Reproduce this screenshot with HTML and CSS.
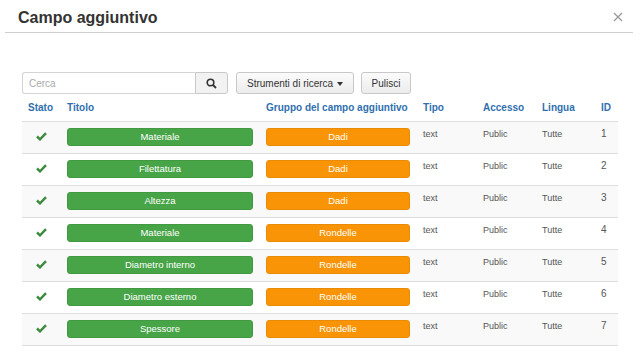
FILE: index.html
```html
<!DOCTYPE html>
<html lang="it">
<head>
  <meta charset="UTF-8">
  <title>Campo aggiuntivo</title>
  <link rel="stylesheet" href="styles.css">
</head>
<body>

  <div class="modal-header">
    <h3>Campo aggiuntivo</h3>
    <svg class="close" width="10" height="10" viewBox="0 0 10 10"><path d="M1 1L9 9M9 1L1 9" stroke="#9a9a9a" stroke-width="1.3" fill="none"/></svg>
  </div>

  <div class="modal-body">
    <div class="toolbar">
      <div class="search">
        <input type="text" placeholder="Cerca">
        <button class="btn btn-search">
          <svg width="11" height="11" viewBox="0 0 11 11"><circle cx="4.5" cy="4.5" r="3.3" stroke="#333" stroke-width="1.6" fill="none"/><path d="M7 7L10 10" stroke="#333" stroke-width="1.8"/></svg>
        </button>
      </div>
      <button class="btn btn-tools">Strumenti di ricerca <span class="caret"></span></button>
      <button class="btn btn-clear">Pulisci</button>
    </div>

    <table>
      <colgroup>
        <col style="width:39px"><col style="width:199px"><col style="width:157px">
        <col style="width:60px"><col style="width:59px"><col style="width:59px"><col style="width:23px">
      </colgroup>
      <thead>
        <tr>
          <th>Stato</th>
          <th>Titolo</th>
          <th>Gruppo del campo aggiuntivo</th>
          <th>Tipo</th>
          <th>Accesso</th>
          <th>Lingua</th>
          <th>ID</th>
        </tr>
      </thead>
      <tbody id="righe"></tbody>
    </table>
  </div>

  <script>
    const campi = [
      ["Materiale", "Dadi"],
      ["Filettatura", "Dadi"],
      ["Altezza", "Dadi"],
      ["Materiale", "Rondelle"],
      ["Diametro interno", "Rondelle"],
      ["Diametro esterno", "Rondelle"],
      ["Spessore", "Rondelle"]
    ];

    const check = '<svg width="11" height="9" viewBox="0 0 11 9"><path d="M1 4.5L4 7.3L10 1.2" stroke="#3b8a3b" stroke-width="2.4" fill="none"/></svg>';

    let html = "";
    campi.forEach((c, i) => {
      html += `<tr>
        <td class="stato">${check}</td>
        <td><span class="lbl lbl-titolo">${c[0]}</span></td>
        <td><span class="lbl lbl-gruppo">${c[1]}</span></td>
        <td>text</td>
        <td>Public</td>
        <td>Tutte</td>
        <td>${i + 1}</td>
      </tr>`;
    });
    document.getElementById("righe").innerHTML = html;
  </script>

</body>
</html>
```

FILE: styles.css
```css
body { margin: 0; background: #fff; font-family: "Liberation Sans", Arial, sans-serif; color: #333; }

.modal-header { display: flex; justify-content: space-between; align-items: center; margin: 0 7px 0 5px; padding: 8px 10px 4px 13px; border-bottom: 1px solid #cfcfcf; }
.modal-header h3 { margin: 0; font-size: 16px; line-height: 20px; font-weight: bold; color: #333; }
.close { margin-top: -2px; }

.modal-body { padding: 39px 22px 0 22px; }

.toolbar { display: flex; align-items: flex-start; height: 22px; margin-bottom: 1px; }
.search { display: flex; }
.search input { width: 173px; height: 22px; box-sizing: border-box; border: 1px solid #d4d4d4; border-right: none; border-radius: 3px 0 0 3px; padding: 2px 6px; font-size: 10px; font-family: inherit; color: #555; }
.search input::placeholder { color: #aaa; }

.btn { height: 22px; box-sizing: border-box; border: 1px solid #c8c8c8; background: linear-gradient(#fbfbfb, #ececec); border-radius: 3px; font-family: inherit; font-size: 10px; color: #333; padding: 0 9px; }
.btn-search { width: 33px; border-radius: 0 3px 3px 0; display: flex; align-items: center; justify-content: center; padding: 0; background: #f2f2f2; }
.btn-tools { margin-left: 8px; width: 118px; }
.btn-clear { margin-left: 7px; width: 50px; }
.caret { display: inline-block; border-top: 4px solid #333; border-left: 3px solid transparent; border-right: 3px solid transparent; vertical-align: middle; margin-left: 1px; }

table { width: 596px; table-layout: fixed; border-collapse: collapse; font-size: 9px; }
th { text-align: left; padding: 6px 0 6px 6px; font-size: 10px; line-height: 14px; font-weight: bold; color: #2f6fae; border-bottom: 1px solid #ddd; white-space: nowrap; }
td { padding: 6px 7px 7px 6px; line-height: 12px; vertical-align: top; color: #555; border-bottom: 1px solid #ddd; }
td:last-child { font-size: 10px; padding-right: 0; }
tbody tr:nth-child(odd) { background: #f9f9f9; }
td.stato { text-align: center; padding: 10px 0 0 0; }

.lbl { display: block; height: 18px; line-height: 16px; border-radius: 3px; text-align: center; color: #fff; font-size: 9.5px; box-sizing: border-box; }
.lbl-titolo { background: #47a447; border: 1px solid #419a41; }
.lbl-gruppo { background: #f89406; border: 1px solid #e98b05; }
```
